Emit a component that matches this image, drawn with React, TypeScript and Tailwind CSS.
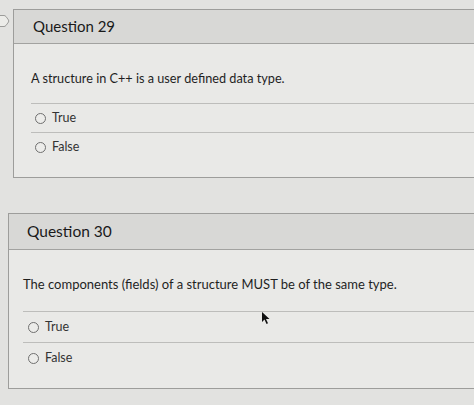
import React from "react";

const Radio = () => (
  <span className="inline-block w-[11px] h-[11px] rounded-full border border-[#6f6f6f] bg-[#ececea]" />
);

function Card(p: {
  title: string;
  text: string;
  cls: string;
  titleCls: string;
  headerCls: string;
  bodyCls: string;
  textCls: string;
  optsCls: string;
  rowCls: string;
  optCls: string;
}) {
  return (
    <div className={`${p.cls} border border-[#9d9d9b] bg-[#e9e9e7]`}>
      <div className={`${p.headerCls} flex items-center bg-[#d8d8d6] border-b border-[#a2a2a0]`}>
        <span className={`${p.titleCls} text-[#1a1a1a]`}>{p.title}</span>
      </div>
      <div className={p.bodyCls}>
        <div className={`${p.textCls} text-[#1f1f1f]`}>{p.text}</div>
        <div className={p.optsCls}>
          {["True", "False"].map((o) => (
            <div key={o} className={`${p.rowCls} flex items-center gap-[6px] border-t border-[#bdbdbb]`}>
              <Radio />
              <span className={`${p.optCls} text-[#333]`}>{o}</span>
            </div>
          ))}
        </div>
      </div>
    </div>
  );
}

export default function App() {
  return (
    <div
      className="relative w-[474px] h-[405px] overflow-hidden bg-[#e2e2e0]"
      style={{ fontFamily: "Lato, 'Open Sans', sans-serif" }}
    >
      <svg className="absolute left-0 top-[14px]" width="10" height="14" viewBox="0 0 10 14">
        <path d="M-2 1.5 H4 Q5 1.5 6 2.5 L8.5 6 Q9 7 8.5 8 L6 11.5 Q5 12.5 4 12.5 H-2" fill="#ecece9" stroke="#9c9c9a" strokeWidth="1" />
      </svg>
      <div className="flex flex-col">
        <Card
          title="Question 29"
          text="A structure in C++ is a user defined data type."
          cls="ml-[13px] mt-[9px] w-[480px] h-[169px]"
          headerCls="h-[34px] pl-[19px]"
          titleCls="text-[15px]"
          bodyCls="pl-[17px] pt-[25px]"
          textCls="text-[12.7px] leading-[18px]"
          optsCls="mt-[16px]"
          rowCls="h-[29px] pl-[4px]"
          optCls="text-[12.5px]"
        />
        <Card
          title="Question 30"
          text="The components (fields) of a structure MUST be of the same type."
          cls="ml-[8px] mt-[35px] w-[480px] h-[176px]"
          headerCls="h-[36px] pl-[18px]"
          titleCls="text-[15.5px]"
          bodyCls="pl-[14px] pt-[24px]"
          textCls="text-[13px] leading-[20px]"
          optsCls="mt-[17px]"
          rowCls="h-[31px] pl-[5px]"
          optCls="text-[12.5px]"
        />
      </div>
      <svg className="absolute left-[261px] top-[311px]" width="10" height="14" viewBox="0 0 10 14">
        <path d="M1 1 L1 11 L3.5 8.5 L5.5 13 L7 12.3 L5 8 L8.5 8 Z" fill="#111" />
      </svg>
    </div>
  );
}
